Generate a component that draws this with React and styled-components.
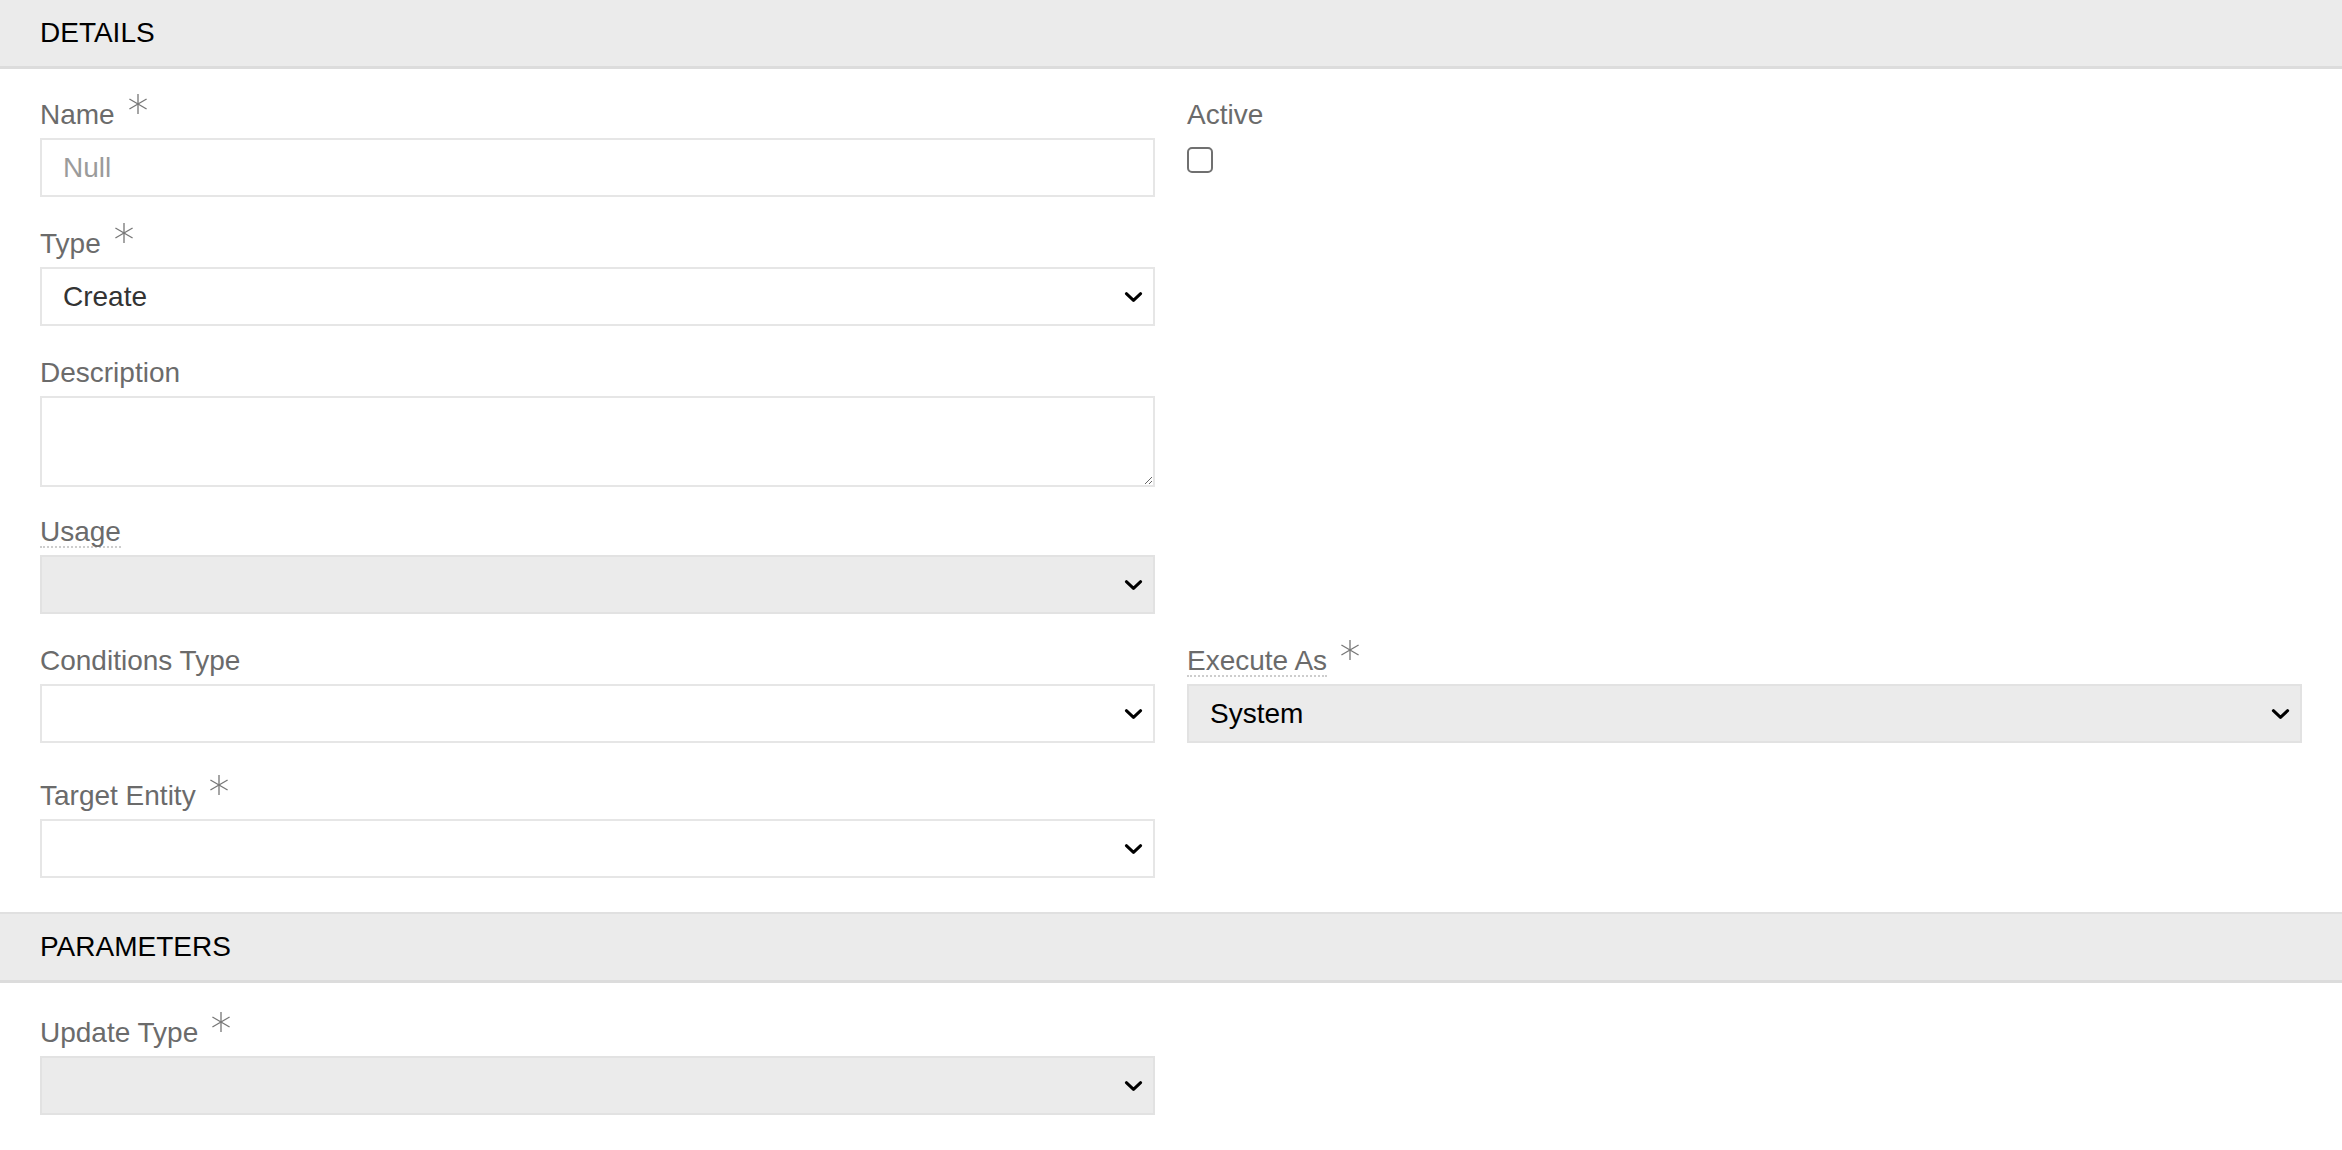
import React from 'react'
import styled, { createGlobalStyle } from 'styled-components'

const GlobalStyle = createGlobalStyle`
  html, body {
    margin: 0;
    padding: 0;
    background: #ffffff;
  }
  body {
    font-family: "Liberation Sans", Arial, Helvetica, sans-serif;
  }
  * {
    box-sizing: border-box;
  }
`

const Asterisk = () => (
  <AsteriskSvg viewBox="0 0 20 20">
    <line x1="10" y1="1" x2="10" y2="19" />
    <line x1="2.2" y1="5.5" x2="17.8" y2="14.5" />
    <line x1="2.2" y1="14.5" x2="17.8" y2="5.5" />
  </AsteriskSvg>
)

const Chevron = () => (
  <ChevronSvg viewBox="0 0 20 12">
    <path d="M2.5 2.5 L10 9.5 L17.5 2.5" />
  </ChevronSvg>
)

function SelectField({ value, $grey, $dark }) {
  return (
    <SelectWrap>
      <Select defaultValue={value} $grey={$grey} $dark={$dark}>
        <option value={value}>{value}</option>
      </Select>
      <Chevron />
    </SelectWrap>
  )
}

export default function App() {
  return (
    <Page>
      <GlobalStyle />
      <SectionHeader>Details</SectionHeader>
      <FormGrid $bottom={34}>
        <Field $col={1} $row={1}>
          <Label>Name<Asterisk /></Label>
          <TextInput placeholder="Null" />
        </Field>
        <Field $col={2} $row={1}>
          <Label>Active</Label>
          <Checkbox type="checkbox" />
        </Field>

        <Field $col={1} $row={2}>
          <Label>Type<Asterisk /></Label>
          <SelectField value="Create" />
        </Field>

        <Field $col={1} $row={3}>
          <Label>Description</Label>
          <TextArea />
        </Field>

        <Field $col={1} $row={4} $mt={-2}>
          <Label><Hint>Usage</Hint></Label>
          <SelectField value="" $grey />
        </Field>

        <Field $col={1} $row={5}>
          <Label>Conditions Type</Label>
          <SelectField value="" />
        </Field>
        <Field $col={2} $row={5}>
          <Label><Hint>Execute As</Hint><Asterisk /></Label>
          <SelectField value="System" $grey $dark />
        </Field>

        <Field $col={1} $row={6} $mt={6}>
          <Label>Target Entity<Asterisk /></Label>
          <SelectField value="" />
        </Field>
      </FormGrid>

      <SectionHeader $topLine>Parameters</SectionHeader>
      <FormGrid $top={35}>
        <Field $col={1} $row={1}>
          <Label>Update Type<Asterisk /></Label>
          <SelectField value="" $grey />
        </Field>
      </FormGrid>
    </Page>
  )
}

const Page = styled.div`
  width: 100%;
  min-height: 1150px;
  background: #ffffff;
`

const SectionHeader = styled.div`
  height: ${(p) => (p.$topLine ? 71 : 69)}px;
  display: flex;
  align-items: center;
  padding: 0 40px;
  background: #ebebeb;
  border-top: ${(p) => (p.$topLine ? '2px solid #e0e0e0' : 'none')};
  border-bottom: 3px solid #dcdcdc;
  font-size: 28px;
  color: #000000;
  text-transform: uppercase;
`

const FormGrid = styled.div`
  display: grid;
  grid-template-columns: 1fr 1fr;
  column-gap: 32px;
  row-gap: 32px;
  align-items: start;
  padding: ${(p) => p.$top || 31}px 40px ${(p) => p.$bottom || 34}px;
`

const Field = styled.div`
  grid-column: ${(p) => p.$col};
  grid-row: ${(p) => p.$row};
  margin-top: ${(p) => p.$mt || 0}px;
  display: flex;
  flex-direction: column;
  align-items: stretch;
  gap: 8px;
`

const Label = styled.div`
  height: 30px;
  font-size: 28px;
  line-height: 30px;
  color: #6b6b6b;
  white-space: nowrap;
`

const Hint = styled.span`
  display: inline-block;
  line-height: 29px;
  border-bottom: 2px dotted #cdcdcd;
`

const AsteriskSvg = styled.svg`
  width: 22px;
  height: 22px;
  margin-left: 12px;
  position: relative;
  top: -7px;
  vertical-align: top;
  stroke: #777777;
  stroke-width: 1.2;
  fill: none;
`

const TextInput = styled.input`
  width: 100%;
  height: 59px;
  margin: 0;
  padding: 0 21px;
  border: 2px solid #e6e6e6;
  border-radius: 0;
  outline: none;
  background: #ffffff;
  font-family: inherit;
  font-size: 28px;
  color: #333333;

  &::placeholder {
    color: #9b9b9b;
  }
`

const TextArea = styled.textarea`
  display: block;
  width: 100%;
  height: 91px;
  margin: 0;
  padding: 12px 21px;
  border: 2px solid #e6e6e6;
  border-radius: 0;
  outline: none;
  resize: vertical;
  font-family: inherit;
  font-size: 28px;
  color: #333333;
`

const SelectWrap = styled.div`
  position: relative;
  width: 100%;
`

const Select = styled.select`
  display: block;
  width: 100%;
  height: 59px;
  margin: 0;
  padding: 0 50px 0 21px;
  appearance: none;
  -webkit-appearance: none;
  border: 2px solid ${(p) => (p.$grey ? '#e2e2e2' : '#e6e6e6')};
  border-radius: 0;
  outline: none;
  background: ${(p) => (p.$grey ? '#ebebeb' : '#ffffff')};
  font-family: inherit;
  font-size: 28px;
  color: ${(p) => (p.$dark ? '#000000' : '#333333')};
`

const ChevronSvg = styled.svg`
  position: absolute;
  right: 12px;
  top: 50%;
  width: 19px;
  height: 12px;
  transform: translateY(-50%);
  pointer-events: none;
  fill: none;
  stroke: #000000;
  stroke-width: 3.2;
  stroke-linecap: round;
  stroke-linejoin: round;
`

const Checkbox = styled.input`
  appearance: none;
  -webkit-appearance: none;
  width: 26px;
  height: 26px;
  margin: 9px 0 0 0;
  border: 2px solid #707070;
  border-radius: 5px;
  background: #ffffff;
`
